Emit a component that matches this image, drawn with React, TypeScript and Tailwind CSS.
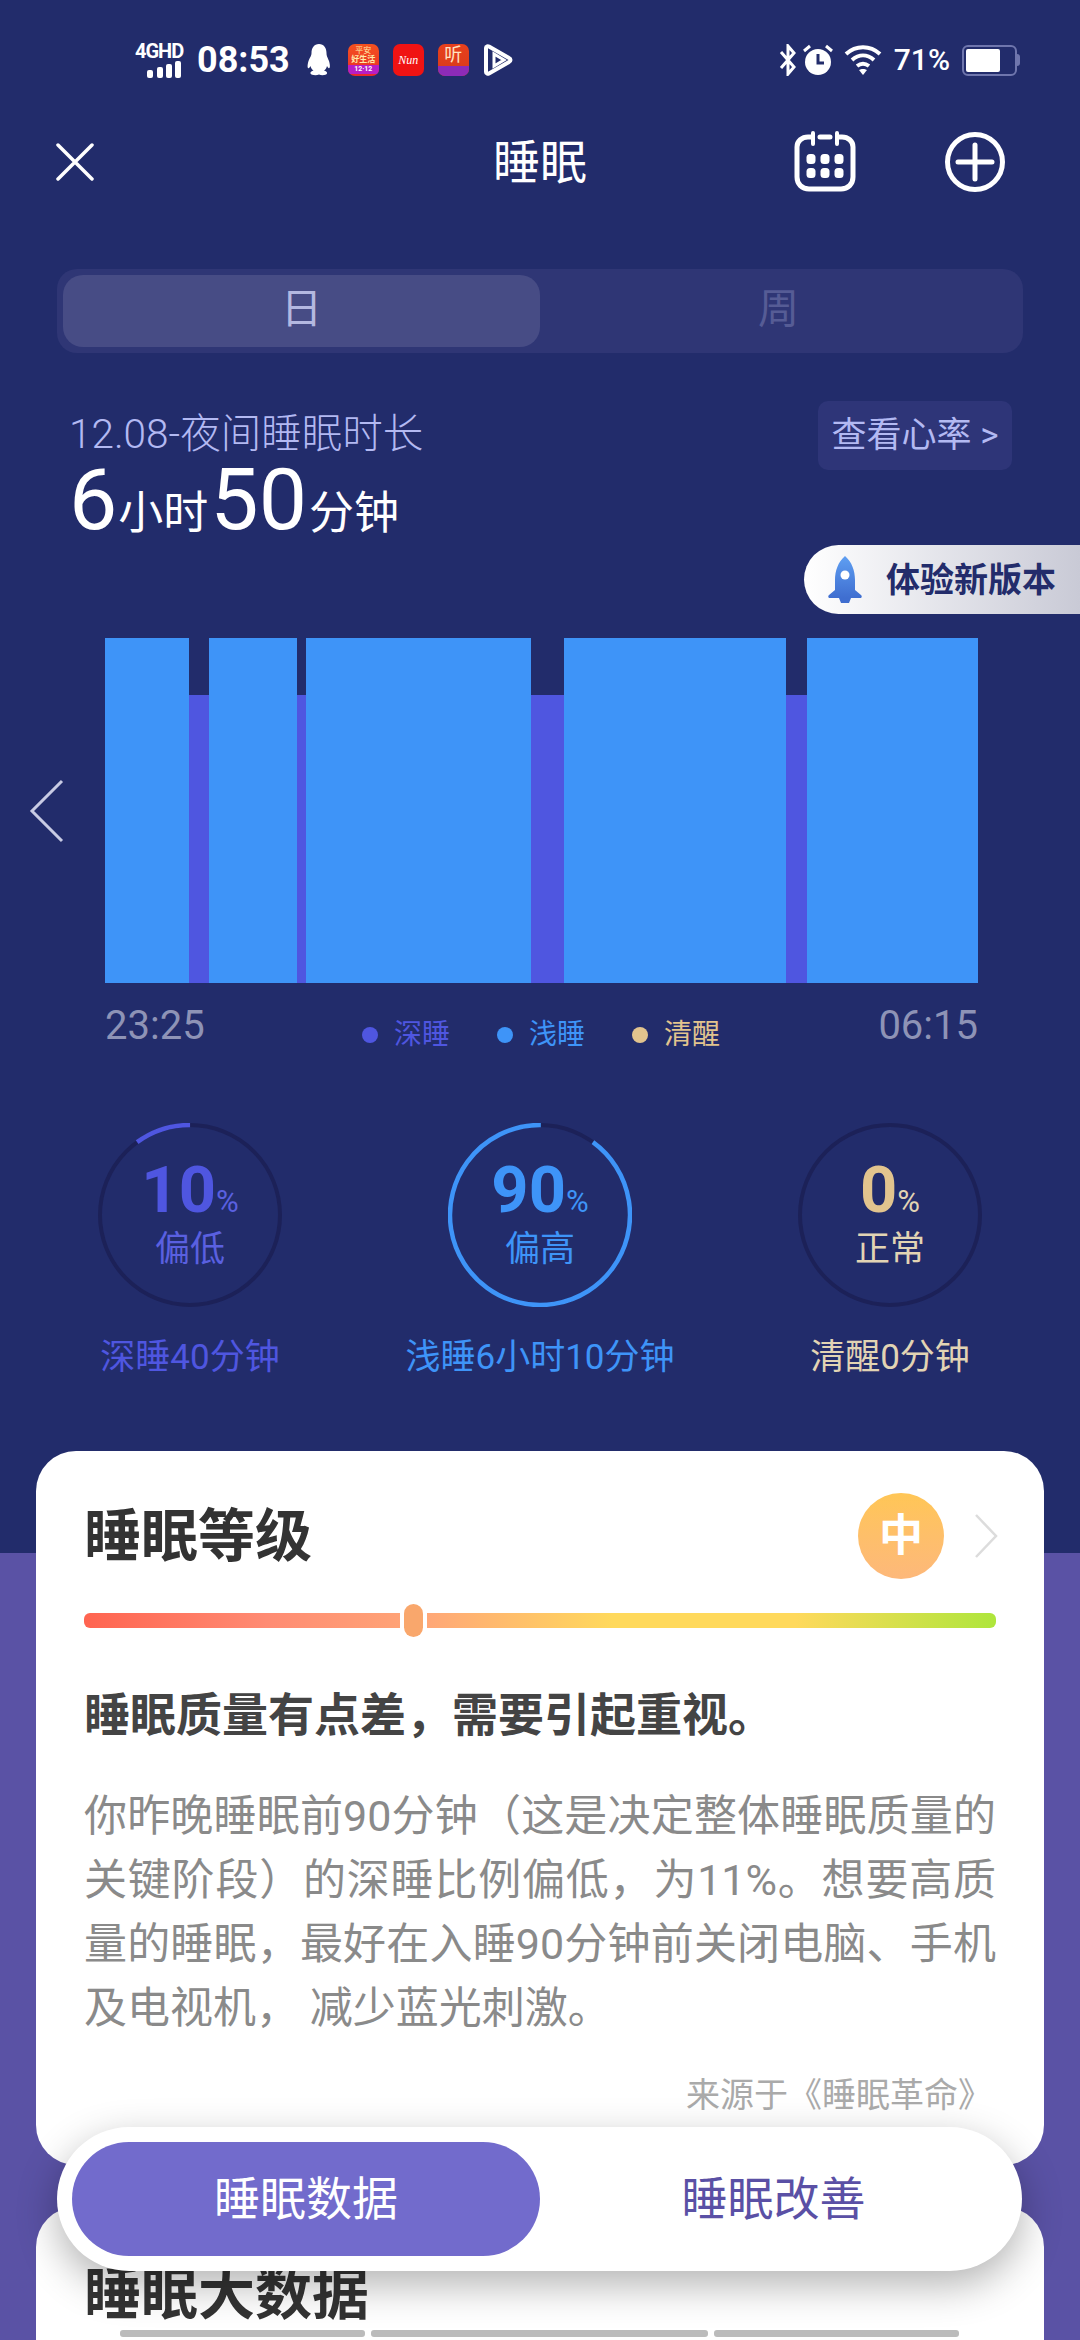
const sans = "font-['Roboto','Noto_Sans_CJK_SC',sans-serif]";

// light bars with deep sleep gaps between them, widths in px
const sleepBars = [
  { w: 84, deep: false },
  { w: 20, deep: true },
  { w: 88, deep: false },
  { w: 9, deep: true },
  { w: 225, deep: false },
  { w: 33, deep: true },
  { w: 222, deep: false },
  { w: 21, deep: true },
  { w: 171, deep: false },
];

const R = 90;
const CIRC = 2 * Math.PI * R;

function Ring({
  percent,
  rotate,
  color,
  children,
}: {
  percent: number;
  rotate: number;
  color: string;
  children: React.ReactNode;
}) {
  return (
    <div className="relative flex h-[184px] w-[184px] flex-col items-center">
      <svg width="184" height="184" viewBox="0 0 184 184" className="absolute inset-0">
        <circle cx="92" cy="92" r={R} fill="none" stroke="#1c2158" strokeWidth="4" />
        {percent > 0 && (
          <circle
            cx="92"
            cy="92"
            r={R}
            fill="none"
            stroke={color}
            strokeWidth="4.500"
            strokeDasharray={`${(CIRC * percent) / 100} ${CIRC}`}
            transform={`rotate(${rotate} 92 92)`}
          />
        )}
      </svg>
      {children}
    </div>
  );
}

function StatusBar() {
  return (
    <div className={`relative flex h-[120px] items-center pl-[135px] pr-[60px] text-white ${sans}`}>
      <div className="flex w-[50px] flex-col items-start">
        <span className="text-[20px] leading-[19px] font-bold tracking-[-1px]">4GHD</span>
        <svg width="36" height="17" viewBox="0 0 36 17" className="ml-[12px]">
          <rect x="0" y="9" width="6" height="8" rx="2" fill="#fff" />
          <rect x="10" y="6" width="6" height="11" rx="2" fill="#fff" />
          <rect x="19" y="3" width="6" height="14" rx="2" fill="#fff" />
          <rect x="28" y="0" width="6" height="17" rx="2" fill="#fff" />
        </svg>
      </div>
      <span className="ml-[12px] text-[36px] leading-none font-bold">08:53</span>
      <svg width="26" height="32" viewBox="0 0 26 32" className="ml-[16px]">
        <path
          d="M13 0c5 0 7.500 4 7.500 9 0 3 1 4 2.500 8 1.500 5 1 8-.5 7-.5-.5-1-1-1.500-2-.5 2-1.500 3.500-3 4.500 2 .5 3.500 1.500 3 3-.5 1.500-5 2.500-8 1-3 1.500-8 .5-8.500-1-.5-1.500 1-2.500 3-3-1.500-1-2.500-2.500-3-4.500-.5 1-1 1.500-1.500 2C1.500 25 1 22 2.500 17 4 13 5.500 12 5.500 9 5.500 4 8 0 13 0z"
          fill="#fff"
        />
      </svg>
      <div className="ml-[16px] flex h-[32px] w-[31px] flex-col items-center justify-center overflow-hidden rounded-[7px] bg-gradient-to-b from-[#f4511e] to-[#e8262a]">
        <span className="text-[8px] leading-[9px] text-[#ffe9a8]">平安</span>
        <span className="text-[8px] leading-[10px] font-bold text-[#ffe9a8]">好生活</span>
        <span className="w-full bg-[#b71ec4] text-center text-[7px] leading-[9px] font-bold text-white">12·12</span>
      </div>
      <div className="ml-[14px] flex h-[32px] w-[31px] items-center justify-center rounded-[7px] bg-[#f01313]">
        <span className="font-['Liberation_Serif',serif] text-[12px] leading-none text-white italic">Nun</span>
      </div>
      <div className="ml-[14px] flex h-[32px] w-[31px] flex-col items-center justify-between overflow-hidden rounded-[7px] bg-gradient-to-b from-[#e8401c] to-[#d83a1a]">
        <span className="text-[18px] leading-[22px] text-[#ffe3c2]">听</span>
        <span className="h-[10px] w-full bg-[#8d2bb8]" />
      </div>
      <svg width="30" height="32" viewBox="0 0 30 32" className="ml-[14px]">
        <path d="M3 4v24c0 2 2 2 3 1.500L26 18c2-1 2-3 0-4L6 2.500C5 2 3 2 3 4z" fill="none" stroke="#fff" strokeWidth="4" />
        <path d="M11 10v12l10-6z" fill="none" stroke="#fff" strokeWidth="3" />
      </svg>

      <div className="ml-auto flex items-center">
        <svg width="18" height="32" viewBox="0 0 18 32">
          <path d="M2 8l13 15-6 7V2l6 7L2 24" fill="none" stroke="#fff" strokeWidth="3" />
        </svg>
        <svg width="32" height="34" viewBox="0 0 32 34" className="ml-[5px]">
          <circle cx="16" cy="19" r="13" fill="#fff" />
          <path d="M16 11v9h6" fill="none" stroke="#222c6b" strokeWidth="3" />
          <path d="M2 8l6-5M30 8l-6-5" stroke="#fff" strokeWidth="3" />
        </svg>
        <svg width="38" height="32" viewBox="0 0 38 32" className="ml-[10px]">
          <path d="M2 10c10-9 24-9 34 0M8 16c7-6 15-6 22 0M13 22c4-3 8-3 12 0" fill="none" stroke="#fff" strokeWidth="4" />
          <path d="M19 31l-4-5c2-1.500 6-1.500 8 0z" fill="#fff" />
        </svg>
        <span className="ml-[12px] text-[30px] leading-none font-medium">71%</span>
        <div className="ml-[12px] flex h-[31px] w-[55px] items-center rounded-[6px] border-2 border-[#6f76ad] p-[2px]">
          <div className="h-full w-[34px] rounded-[2px] bg-white" />
        </div>
        <div className="h-[12px] w-[3px] rounded-r bg-[#6f76ad]" />
      </div>
    </div>
  );
}

export default function App() {
  return (
    <div className={`relative h-[2340px] w-[1080px] overflow-hidden bg-[#5a52a5] ${sans}`}>
      <div className="h-[1553px] bg-[#222c6b]">
        <StatusBar />

        <div className="relative flex h-[84px] items-center justify-center px-[57px] text-white">
          <svg width="40" height="38" viewBox="0 0 40 38" className="absolute left-[55px]">
            <path d="M3 2l34 34M37 2L3 36" fill="none" stroke="#fff" strokeWidth="3.500" strokeLinecap="round" />
          </svg>
          <span className="text-[47px] leading-none">睡眠</span>
          <svg width="62" height="62" viewBox="0 0 62 62" className="absolute left-[794px]">
            <path
              d="M18 6h-4C8 6 3 10 3 16v30c0 7 5 12 12 12h32c7 0 12-5 12-12V16c0-6-5-10-11-10h-4M26 6h10"
              fill="none"
              stroke="#fff"
              strokeWidth="5"
              strokeLinecap="round"
            />
            <path d="M19 2v11M43 2v11" stroke="#fff" strokeWidth="4" strokeLinecap="round" />
            {[17, 31, 45].map((x) =>
              [28, 42].map((y) => <rect key={`${x}-${y}`} x={x - 4.500} y={y - 5} width="9" height="10" rx="3.500" fill="#fff" />)
            )}
          </svg>
          <svg width="62" height="62" viewBox="0 0 62 62" className="absolute left-[944px]">
            <circle cx="31" cy="31" r="27.500" fill="none" stroke="#fff" strokeWidth="5" />
            <path d="M14 31h34M31 14v34" stroke="#fff" strokeWidth="5" strokeLinecap="round" />
          </svg>
        </div>

        <div className="mx-[57px] mt-[65px] flex h-[84px] rounded-[20px] bg-[#2f3675] p-[6px]">
          <div className="flex h-full w-[477px] items-center justify-center rounded-[20px] bg-[#474c85] pb-[3px] text-[41px] leading-none text-[#b4b8e0]">
            日
          </div>
          <div className="flex h-full flex-1 items-center justify-center pb-[3px] text-[41px] leading-none text-[#565c95]">
            周
          </div>
        </div>

        <div className="relative ml-[69px] mr-[68px] mt-[48px] flex h-[237px] items-start justify-between">
          <div>
            <div className="mt-[9px] text-[40.500px] leading-[48px] font-light text-[#b3b9f2]">12.08-夜间睡眠时长</div>
            <div className="-mt-[3px] flex items-baseline text-white">
              <span className="text-[86px] leading-[90px]">6</span>
              <span className="ml-[1px] text-[45px] leading-none">小时</span>
              <span className="ml-[2px] text-[86px] leading-[90px]">50</span>
              <span className="ml-[2px] text-[45px] leading-none">分钟</span>
            </div>
          </div>
          <div className="flex h-[69px] w-[194px] items-center justify-center rounded-[10px] bg-[#2e3578] text-[35px] leading-none text-[#b3b9f2]">
            查看心率 &gt;
          </div>
        </div>

        <div className="relative ml-[105px] flex h-[345px] w-[873px] items-end">
          {sleepBars.map((bar, i) =>
            bar.deep ? (
              <div key={i} className="h-[288px] bg-[#4f56e0]" style={{ width: bar.w }} />
            ) : (
              <div key={i} className="h-[345px] bg-[#3e94f8]" style={{ width: bar.w }} />
            )
          )}
        </div>

        <div className="relative mx-[105px] flex h-[84px] w-[873px] pt-[23px]">
          <span className="w-[150px] text-[40px] leading-[40px] text-[#8e93b6]">23:25</span>
          <div className="ml-[107px] mt-[11px] flex h-[36px] items-center">
            <span className="h-[16px] w-[16px] rounded-full bg-[#4f56e0]" />
            <span className="ml-[16px] text-[28px] leading-none text-[#4f56e0]">深睡</span>
            <span className="ml-[47px] h-[16px] w-[16px] rounded-full bg-[#3e94f8]" />
            <span className="ml-[16px] text-[28px] leading-none text-[#3e94f8]">浅睡</span>
            <span className="ml-[47px] h-[16px] w-[16px] rounded-full bg-[#e2c48e]" />
            <span className="ml-[16px] text-[28px] leading-none text-[#e2c48e]">清醒</span>
          </div>
          <span className="ml-auto text-[40px] leading-[40px] text-[#8e93b6]">06:15</span>
        </div>

        <div className="mt-[56px] grid grid-cols-3 px-[15px]">
          <div className="flex flex-col items-center">
            <Ring percent={10} rotate={-126} color="#4f56e0">
              <div className="mt-[33px] flex items-baseline text-[#4f56e0]">
                <span className="text-[65px] leading-[68px] font-bold">10</span>
                <span className="text-[31px] leading-none text-[#5a60e0]">%</span>
              </div>
              <span className="relative mt-[6px] text-[35px] leading-[40px] text-[#5a60e0]">偏低</span>
            </Ring>
            <span className="mt-[31px] text-[35px] leading-[40px] text-[#4f56e0]">深睡40分钟</span>
          </div>
          <div className="flex flex-col items-center">
            <Ring percent={90} rotate={-54} color="#3e94f8">
              <div className="mt-[33px] flex items-baseline text-[#3e94f8]">
                <span className="text-[65px] leading-[68px] font-bold">90</span>
                <span className="text-[31px] leading-none">%</span>
              </div>
              <span className="relative mt-[6px] text-[35px] leading-[40px] text-[#3e94f8]">偏高</span>
            </Ring>
            <span className="mt-[31px] text-[35px] leading-[40px] text-[#3e94f8]">浅睡6小时10分钟</span>
          </div>
          <div className="flex flex-col items-center">
            <Ring percent={0} rotate={0} color="#e2c48e">
              <div className="mt-[33px] flex items-baseline text-[#e2c48e]">
                <span className="text-[65px] leading-[68px] font-bold">0</span>
                <span className="text-[31px] leading-none text-[#e2d4b4]">%</span>
              </div>
              <span className="relative mt-[6px] text-[35px] leading-[40px] text-[#e2d4b4]">正常</span>
            </Ring>
            <span className="mt-[31px] text-[35px] leading-[40px] text-[#e2d4b4]">清醒0分钟</span>
          </div>
        </div>
      </div>

      {/* rocket pill sticks to the right edge over the summary */}
      <div className="absolute left-[804px] top-[545px] flex h-[69px] w-[276px] items-center rounded-l-[35px] bg-gradient-to-r from-white to-[#c9cad6] pl-[22px]">
        <svg width="38" height="48" viewBox="0 0 38 48">
          <defs>
            <linearGradient id="rocket" x1="0" y1="0" x2="0" y2="1">
              <stop offset="0" stopColor="#5f9ff2" />
              <stop offset="1" stopColor="#3f6ed0" />
            </linearGradient>
          </defs>
          <path d="M19 0c7 6 10 15 10 24v10l6 5c1 1 1 2 0 3H3c-1-1-1-2 0-3l6-5V24C9 15 12 6 19 0z" fill="url(#rocket)" />
          <path d="M13 42h12l-2 5h-8z" fill="#3f6ed0" />
          <circle cx="19" cy="19" r="4.500" fill="#fff" />
        </svg>
        <span className="ml-[22px] text-[34px] leading-none font-bold text-[#232c6b]">体验新版本</span>
      </div>

      <svg width="38" height="66" viewBox="0 0 38 66" className="absolute left-[28px] top-[778px]">
        <path d="M34 3L4 33l30 30" fill="none" stroke="#c8cbe4" strokeWidth="3" />
      </svg>

      <div className="relative z-10 mx-[36px] -mt-[102px] h-[714px] rounded-[40px] bg-white px-[48px] pt-[42px]">
        <div className="relative flex h-[86px] items-center justify-between">
          <span className="text-[57px] leading-none font-bold text-[#333]">睡眠等级</span>
          <div className="mr-[52px] flex h-[86px] w-[86px] items-center justify-center rounded-full bg-gradient-to-b from-[#ffc656] to-[#fdb87a] text-[44px] leading-none font-bold text-white">
            中
          </div>
          <svg width="24" height="46" viewBox="0 0 24 46" className="absolute right-[-2px] top-[20px]">
            <path d="M2 2l20 21L2 44" fill="none" stroke="#dcdcdc" strokeWidth="2.500" />
          </svg>
        </div>

        <div className="relative mt-[34px] h-[15px] rounded-[6px] bg-[linear-gradient(90deg,#ff6450_0%,#ff8b73_20%,#ffa877_38%,#ffd95c_58%,#ffd95c_78%,#aee63c_100%)]">
          <div className="absolute -top-[9px] left-[316px] h-[33px] w-[27px] border-x-[4px] border-white bg-white">
            <div className="mx-auto h-full w-[19px] rounded-full bg-[#f9a76c]" />
          </div>
        </div>

        <div className="mt-[57px] text-[46px] leading-[60px] font-bold text-[#444]">睡眠质量有点差，需要引起重视。</div>

        <div className="mt-[39px] text-[43px] leading-[64px] text-[#8a8a8a]">
          <p className="[text-align-last:justify]">你昨晚睡眠前90分钟（这是决定整体睡眠质量的</p>
          <p className="[text-align-last:justify]">关键阶段）的深睡比例偏低，为11%。想要高质</p>
          <p className="[text-align-last:justify]">量的睡眠，最好在入睡90分钟前关闭电脑、手机</p>
          <p>及电视机， 减少蓝光刺激。</p>
        </div>

        <div className="mt-[30px] pr-[4px] text-right text-[34px] leading-[50px] text-[#aaa]">来源于《睡眠革命》</div>
      </div>

      <div className="relative z-10 mx-[36px] mt-[42px] h-[200px] rounded-[40px] bg-white pt-[58px]">
        <div className="ml-[48px] text-[57px] leading-[60px] font-bold text-[#333]">睡眠大数据</div>
        <div className="ml-[84px] mt-[5px] flex gap-[6px]">
          <div className="h-[7px] w-[245px] rounded-[3px] bg-[#bbb]" />
          <div className="h-[7px] w-[337px] rounded-[3px] bg-[#bbb]" />
          <div className="h-[7px] w-[245px] rounded-[3px] bg-[#bbb]" />
        </div>
      </div>

      {/* bottom switcher floats over the cards */}
      <div className="absolute left-[57px] top-[2127px] z-20 flex h-[144px] w-[965px] items-center rounded-[72px] bg-white p-[15px] shadow-[0_14px_40px_rgba(0,0,0,0.3)]">
        <div className="flex h-[114px] w-[468px] items-center justify-center rounded-[57px] bg-[#726bcc] text-[46px] leading-none text-white">
          睡眠数据
        </div>
        <div className="flex h-[114px] flex-1 items-center justify-center text-[46px] leading-none text-[#5a50a5]">
          睡眠改善
        </div>
      </div>
    </div>
  );
}
